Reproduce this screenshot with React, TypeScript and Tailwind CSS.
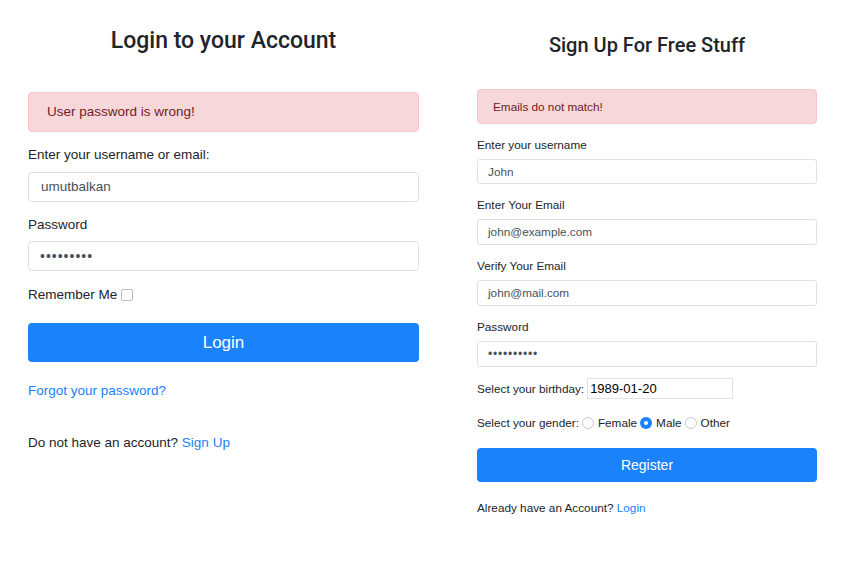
import React from 'react'

const font = { fontFamily: '"Liberation Sans", Arial, sans-serif' }
const titleFont = { fontFamily: 'Roboto, "Liberation Sans", sans-serif' }

function Radio({ checked, label }: { checked?: boolean; label: string }) {
  return (
    <span className="flex items-center">
      {checked ? (
        <span className="ml-[3px] mr-[4px] flex h-[12px] w-[12px] items-center justify-center rounded-full bg-[#1a82fb]">
          <span className="h-[4px] w-[4px] rounded-full bg-white" />
        </span>
      ) : (
        <span className="ml-[3px] mr-[4px] h-[12px] w-[12px] rounded-full border border-[#c9c9c9] bg-white" />
      )}
      {label}
    </span>
  )
}

function LoginForm() {
  return (
    <div className="w-[391px] text-[13.5px] text-[#212529]">
      <h1 className="pt-[27px] text-center text-[23px] font-medium leading-[28px] text-[#212529]" style={titleFont}>
        Login to your Account
      </h1>
      <div className="mt-[37px] flex h-[40px] items-center rounded-[4px] border border-[#f5c6cb] bg-[#f8d7da] px-[18px] text-[#721c24]">
        User password is wrong!
      </div>
      <div className="mt-[13px] leading-[20px]">Enter your username or email:</div>
      <div className="mt-[7px] flex h-[30px] items-center rounded-[4px] border border-[#dfe1e5] px-[12px] text-[#495057]">
        umutbalkan
      </div>
      <div className="mt-[13px] leading-[20px]">Password</div>
      <div className="mt-[6px] flex h-[30px] items-center rounded-[4px] border border-[#dfe1e5] px-[11px] text-[14px] tracking-[1px] text-[#495057]">
        •••••••••
      </div>
      <div className="mt-[14px] flex items-center leading-[20px]">
        Remember Me
        <span className="ml-[4px] h-[12px] w-[12px] rounded-[2px] border border-[#bdbdbd] bg-white" />
      </div>
      <div className="mt-[18px] flex h-[39px] items-center justify-center rounded-[4px] bg-[#1a82fb] text-[17px] text-white">
        Login
      </div>
      <div className="mt-[19px] leading-[20px] text-[#1a7ffb]">Forgot your password?</div>
      <div className="mt-[32px] leading-[20px]">
        Do not have an account? <span className="text-[#1a7ffb]">Sign Up</span>
      </div>
    </div>
  )
}

function Field({ label, value, dots, first }: { label: string; value: string; dots?: boolean; first?: boolean }) {
  return (
    <>
      <div className="mt-[12px] leading-[18px]">{label}</div>
      <div
        className={`mt-[5px] flex ${first ? 'h-[25px]' : 'h-[26px]'} items-center rounded-[3px] border border-[#dfe1e5] px-[10px] text-[#495057] ${dots ? 'text-[12px] tracking-[0.8px]' : ''}`}
      >
        {value}
      </div>
    </>
  )
}

function SignupForm() {
  return (
    <div className="w-[340px] text-[11.75px] text-[#212529]">
      <h1 className="pt-[32px] text-center text-[20px] font-medium leading-[26px]" style={titleFont}>
        Sign Up For Free Stuff
      </h1>
      <div className="mt-[31px] flex h-[35px] items-center rounded-[4px] border border-[#f5c6cb] bg-[#f8d7da] px-[15px] text-[#721c24]">
        Emails do not match!
      </div>
      <Field first label="Enter your username" value="John" />
      <Field label="Enter Your Email" value="john@example.com" />
      <Field label="Verify Your Email" value="john@mail.com" />
      <Field label="Password" value="••••••••••" dots />
      <div className="mt-[11px] flex h-[21px] items-center">
        Select your birthday:
        <div className="ml-[3px] flex h-[21px] w-[146px] items-center border border-[#e2e2e2] px-[2px] text-[13px] text-black">
          1989-01-20
        </div>
      </div>
      <div className="mt-[15px] flex items-center leading-[18px]">
        Select your gender:
        <Radio label="Female" />
        <Radio checked label="Male" />
        <Radio label="Other" />
      </div>
      <div className="mt-[16px] flex h-[34px] items-center justify-center rounded-[4px] bg-[#1a82fb] text-[14px] text-white">
        Register
      </div>
      <div className="mt-[17px] leading-[18px]">
        Already have an Account? <span className="text-[#1a7ffb]">Login</span>
      </div>
    </div>
  )
}

export default function App() {
  return (
    <div className="flex h-[581px] w-[852px] gap-[58px] bg-white pl-[28px]" style={font}>
      <LoginForm />
      <SignupForm />
    </div>
  )
}
